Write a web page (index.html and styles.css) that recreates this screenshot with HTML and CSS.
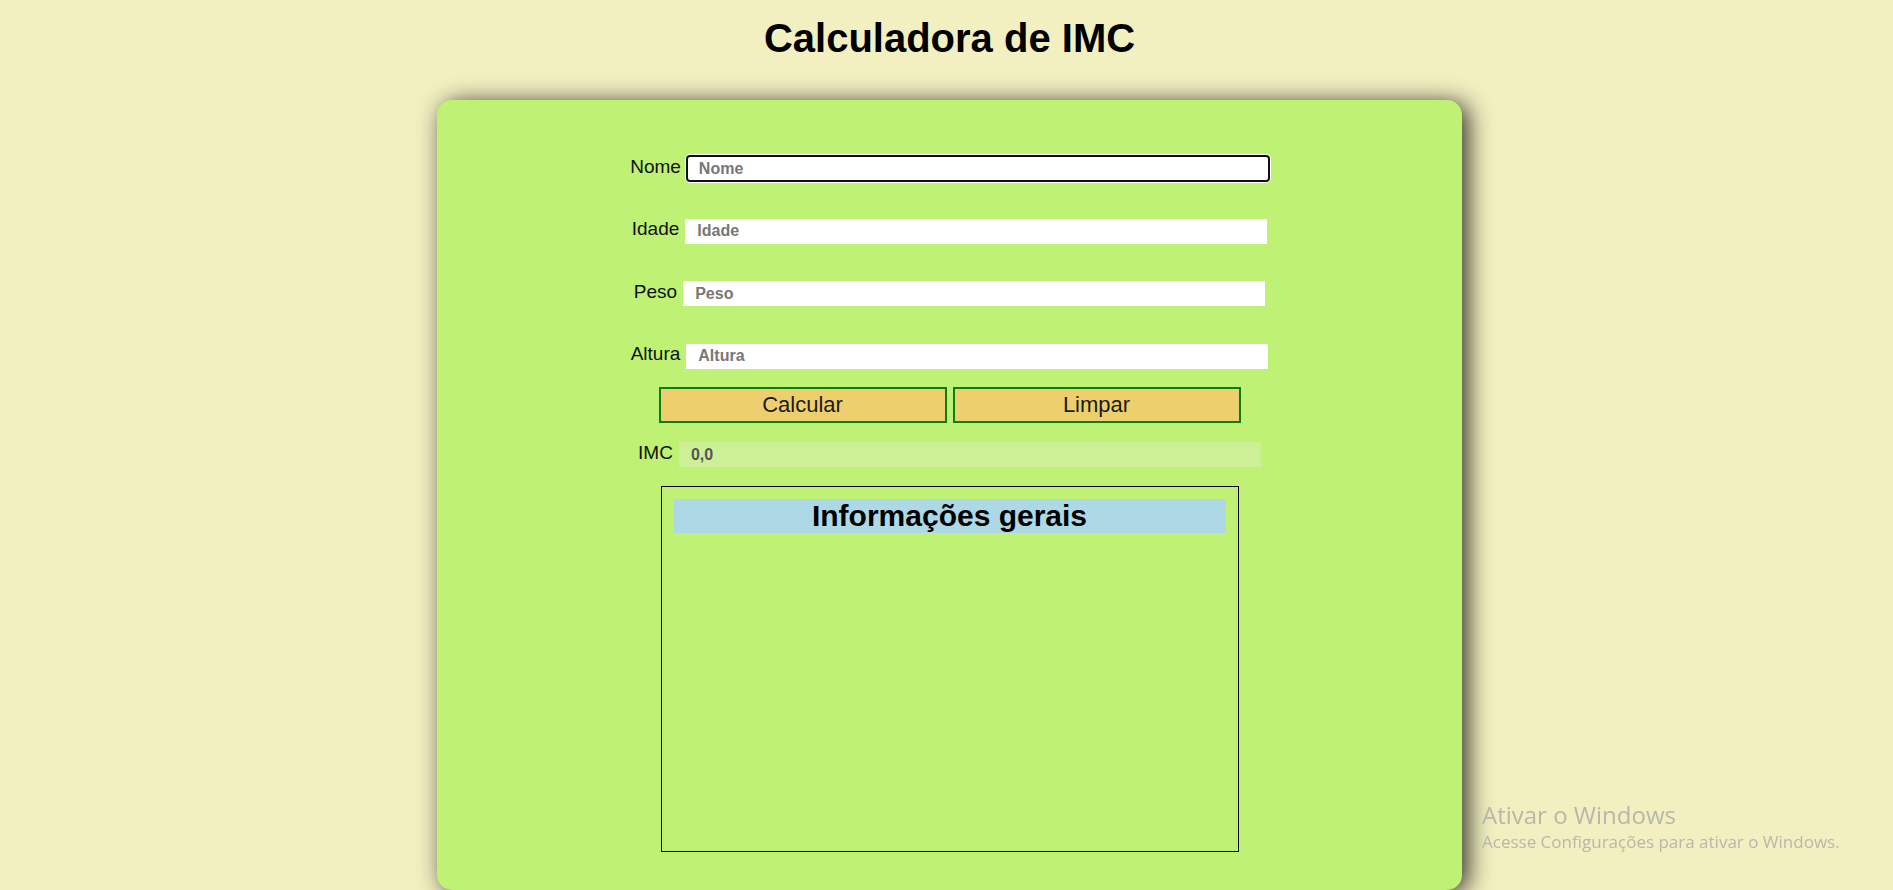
FILE: index.html
```
<!DOCTYPE html>
<html lang="pt-BR">
<head>
<meta charset="utf-8">
<title>Calculadora de IMC</title>
<link rel="stylesheet" href="styles.css">
</head>
<body>
<h1 class="title">Calculadora de IMC</h1>
<main class="card">
  <form class="form">
    <div class="row"><label class="label" for="nome">Nome</label><input id="nome" class="field focused" type="text" placeholder="Nome"></div>
    <div class="row"><label class="label" for="idade">Idade</label><input id="idade" class="field" type="text" placeholder="Idade"></div>
    <div class="row"><label class="label" for="peso">Peso</label><input id="peso" class="field" type="text" placeholder="Peso"></div>
    <div class="row"><label class="label" for="altura">Altura</label><input id="altura" class="field" type="text" placeholder="Altura"></div>
    <div class="buttons"><button type="button" class="btn">Calcular</button><button type="button" class="btn">Limpar</button></div>
    <div class="row imc-row"><label class="label" for="imc">IMC</label><input id="imc" class="field result" type="text" value="0,0" readonly></div>
  </form>
  <section class="info">
    <h2 class="info-title">Informações gerais</h2>
  </section>
</main>
<div class="watermark">
  <div class="wm-title">Ativar o Windows</div>
  <div class="wm-sub">Acesse Configurações para ativar o Windows.</div>
</div>
</body>
</html>
```
FILE: styles.css
```
html, body {
  margin: 0;
  height: 100%;
  overflow: hidden;
}
body {
  background: #f2f0c1;
  font-family: "Liberation Sans", Arial, sans-serif;
  padding-left: 6px;
  box-sizing: border-box;
}
.title {
  margin: 15px 0 0;
  height: 85px;
  font-size: 40px;
  line-height: 46px;
  font-weight: bold;
  text-align: center;
  color: #000;
}
.card {
  width: 1025px;
  margin: 0 auto;
  box-sizing: border-box;
  background: #bef174;
  border-radius: 15px;
  padding: 56px 0 38px;
  box-shadow: 6px 3px 24px rgba(0, 0, 0, 0.8);
  display: flex;
  flex-direction: column;
  align-items: center;
}
.form {
  display: flex;
  flex-direction: column;
  align-items: center;
  margin: 0;
}
.row {
  display: flex;
  align-items: center;
  justify-content: center;
  gap: 6px;
  height: 25px;
}
.row + .row {
  margin-top: 37.5px;
}
.label {
  font-size: 19px;
  color: #111;
  line-height: 22px;
  padding-bottom: 4px;
}
.field {
  width: 582px;
  height: 25px;
  box-sizing: border-box;
  border: none;
  padding: 0 12px;
  margin: 0;
  background: #fff;
  font-family: "Liberation Sans", Arial, sans-serif;
  font-size: 16px;
  font-weight: bold;
  color: #555;
  outline: none;
}
.field::placeholder {
  color: #777;
  font-weight: bold;
}
.focused {
  border-radius: 3px;
  outline: 2px solid #101010;
  outline-offset: -1px;
  box-shadow: 0 0 0 2px #fff;
}
.buttons {
  display: flex;
  gap: 6px;
  margin-top: 18.5px;
}
.btn {
  width: 288px;
  height: 36px;
  box-sizing: border-box;
  border: 2px solid #0a800a;
  background: #eecf6d;
  font-family: "Liberation Sans", Arial, sans-serif;
  font-size: 22px;
  color: #1a1a1a;
  padding: 0;
  margin: 0;
}
.row.imc-row {
  margin-top: 19px;
}
.result {
  background: #cdf097;
  color: #555;
}
.info {
  margin-top: 19px;
  width: 578px;
  height: 366px;
  box-sizing: border-box;
  border: 1px solid #000;
  padding: 12px;
}
.info-title {
  margin: 0;
  background: #add8e6;
  font-size: 30px;
  line-height: 34px;
  font-weight: bold;
  text-align: center;
  color: #000;
}
.watermark {
  position: fixed;
  left: 1482px;
  top: 799px;
  color: #b7b7ac;
  font-family: "Open Sans", "Noto Sans", sans-serif;
}
.wm-title {
  font-size: 24px;
  line-height: 31px;
}
.wm-sub {
  font-size: 17px;
  line-height: 24px;
}
```
